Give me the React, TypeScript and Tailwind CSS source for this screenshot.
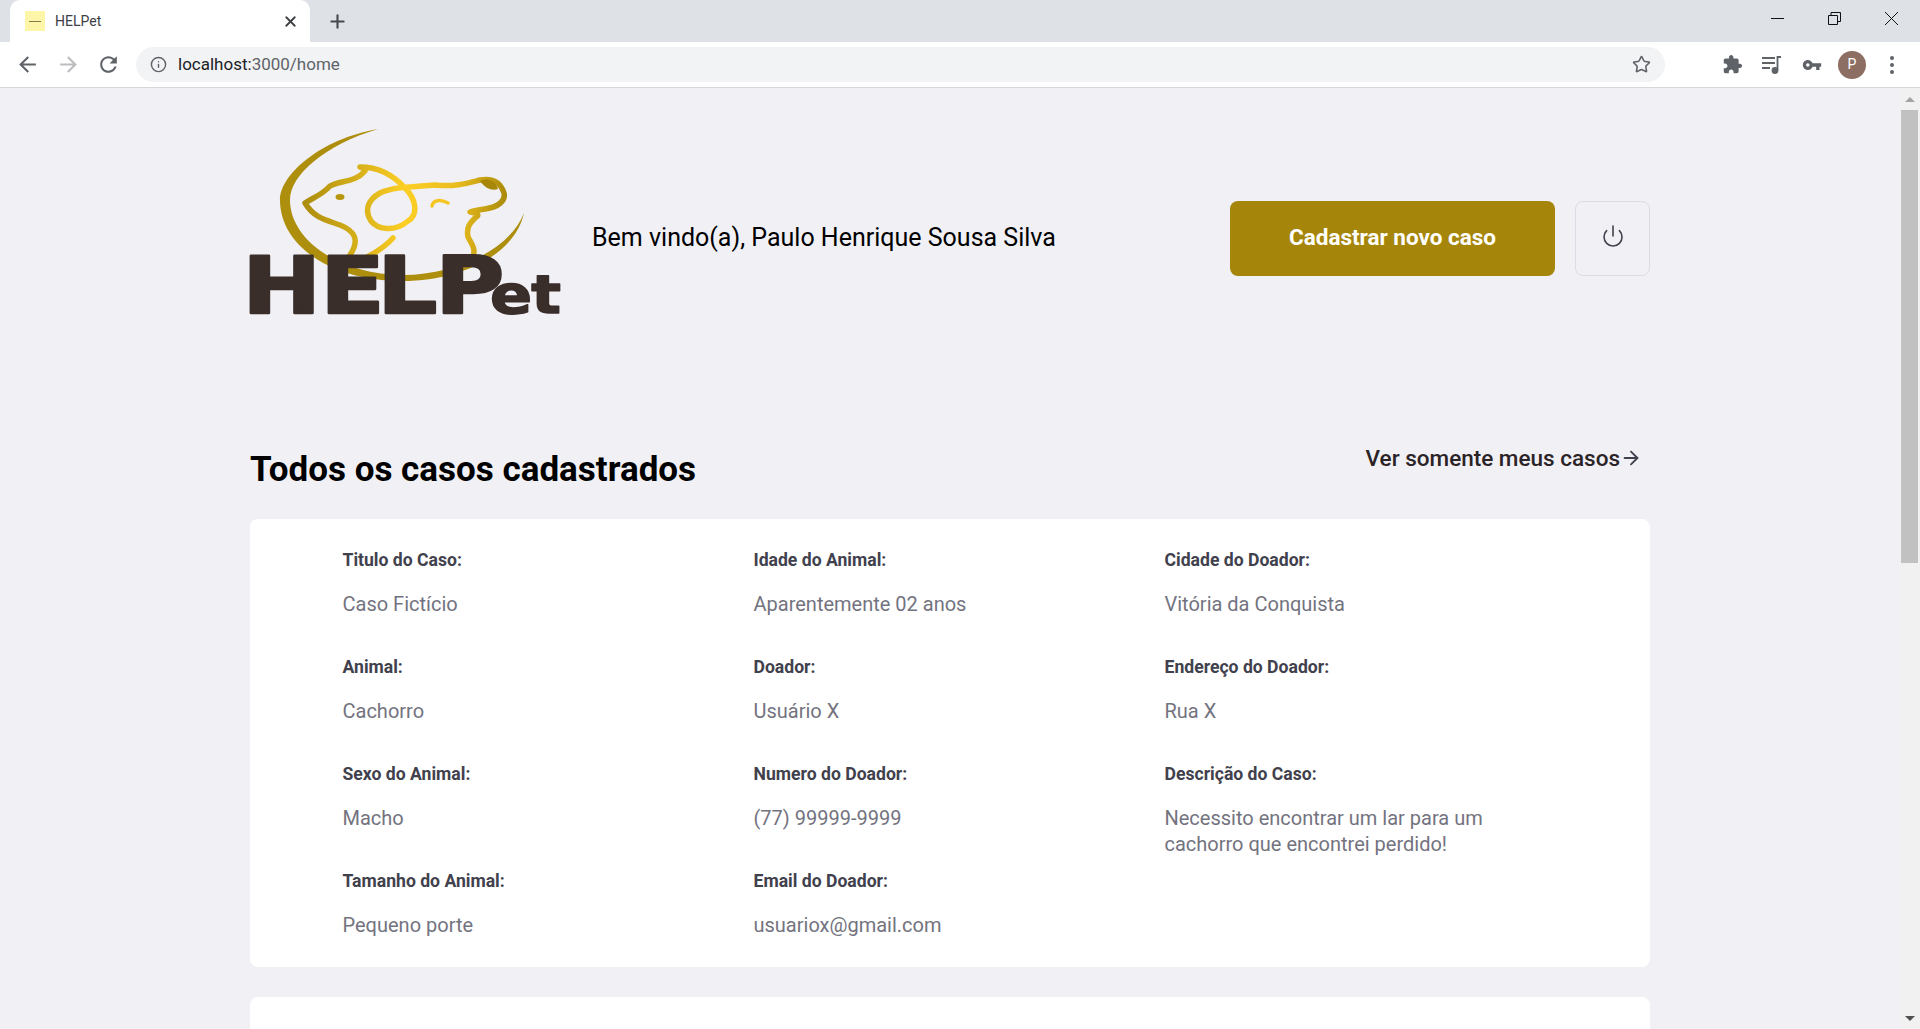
import { ArrowRight, Info, Star, Plus, X, Power } from "lucide-react";

interface Field {
  label: string;
  value: string;
}

const columns: Field[][] = [
  [
    { label: "Titulo do Caso:", value: "Caso Fictício" },
    { label: "Animal:", value: "Cachorro" },
    { label: "Sexo do Animal:", value: "Macho" },
    { label: "Tamanho do Animal:", value: "Pequeno porte" },
  ],
  [
    { label: "Idade do Animal:", value: "Aparentemente 02 anos" },
    { label: "Doador:", value: "Usuário X" },
    { label: "Numero do Doador:", value: "(77) 99999-9999" },
    { label: "Email do Doador:", value: "usuariox@gmail.com" },
  ],
  [
    { label: "Cidade do Doador:", value: "Vitória da Conquista" },
    { label: "Endereço do Doador:", value: "Rua X" },
    { label: "Descrição do Caso:", value: "Necessito encontrar um lar para um cachorro que encontrei perdido!" },
  ],
];

const Logo = () => (
  <svg viewBox="0 0 350 215" className="w-[350px] h-[215px] -ml-[20px] -my-[13px] shrink-0">
    <defs>
      <linearGradient id="gold" gradientUnits="userSpaceOnUse" x1="70" y1="0" x2="280" y2="0">
        <stop offset="0" stopColor="#a88a0c" />
        <stop offset="0.5" stopColor="#fdcf25" />
        <stop offset="0.75" stopColor="#e8bc1e" />
        <stop offset="1" stopColor="#a68708" />
      </linearGradient>
    </defs>
    {/* ring */}
    <path
      d="M148 14C90 24 50 60 50 85C50 130 100 166 173 166C230 166 285 140 294 98C280 135 225 160 173 160C110 160 60 125 60 85C60 60 95 30 148 14Z"
      fill="#ad8e0d"
    />
    {/* dog */}
    <path
      d="M120 140C130 125 125 116 110 110C96 105 84 103 75 88C84 82 92 80 100 71C110 65 125 68 135 56C133 53 131 52 130 52C150 52 165 62 175 73C187 85 188 100 178 106C165 117 148 115 141 106C134 95 138 85 150 78C165 71 185 72 205 70C225 72 238 68 250 65C262 63 270 66 274 78C276 86 268 92 255 94C248 95 243 96 240 97C247 98 250 100 246 102C240 108 236 112 238 122C242 130 248 135 240 147M163 123C155 132 145 138 135 143"
      fill="none"
      stroke="url(#gold)"
      strokeWidth="5.5"
      strokeLinecap="round"
      strokeLinejoin="round"
    />
    <path d="M250 66C258 62 266 66 268 74C262 76 256 74 250 66Z" fill="#a68708" />
    <ellipse cx="110" cy="82" rx="4.5" ry="3" fill="#b8960f" />
    <path d="M202 91C203 85 210 84 218 88" fill="none" stroke="#f5c623" strokeWidth="3.5" strokeLinecap="round" />
    {/* wordmark */}
    <g transform="scale(1.2 1)">
      <text
        x="10.5 75.5 123 171.3"
        y="198"
        fontFamily="'DejaVu Sans', sans-serif"
        fontWeight="700"
        fontSize="78"
        fill="#3a2e2b"
        stroke="#3a2e2b"
        strokeWidth="2.5"
        strokeLinejoin="round"
      >
        HELP
      </text>
    </g>
    <g transform="scale(1.15 1)">
      <text
        x="226 262"
        y="198"
        fontFamily="'DejaVu Sans', sans-serif"
        fontWeight="700"
        fontSize="54"
        fill="#3a2e2b"
        stroke="#3a2e2b"
        strokeWidth="1.5"
        strokeLinejoin="round"
      >
        et
      </text>
    </g>
  </svg>
);

const BrowserChrome = () => (
  <div className="h-[88px] shrink-0 flex flex-col font-['Roboto',sans-serif]">
    <div className="h-[42px] bg-[#dee1e6] flex items-end pl-[10px]">
      <div className="w-[300px] h-[42px] bg-white rounded-t-[10px] flex items-center pl-[15px] pr-[11px]">
        <div className="w-5 h-5 bg-[#fdf5a8] flex items-center justify-center">
          <div className="w-3 h-px bg-[#8a7a4a]" />
        </div>
        <span className="ml-[10px] text-[14px] text-[#3c4043] flex-1">HELPet</span>
        <X size={17} strokeWidth={2.5} className="text-[#3c4043]" />
      </div>
      <div className="h-[42px] flex items-center ml-[17px]">
        <Plus size={21} strokeWidth={2.4} className="text-[#45484d]" />
      </div>
      <div className="flex-1" />
      <div className="h-[42px] flex items-center pb-[5px] text-[#111]">
        <div className="w-[57px] flex justify-center">
          <svg width="13" height="13" viewBox="0 0 13 13" stroke="currentColor"><path d="M0 6.5h13" /></svg>
        </div>
        <div className="w-[57px] flex justify-center">
          <svg width="13" height="13" viewBox="0 0 13 13" fill="none" stroke="currentColor"><path d="M.5 3.5h9v9h-9zM3 3.5V.5h9.5v9H9.5" /></svg>
        </div>
        <div className="w-[57px] flex justify-center">
          <svg width="13" height="13" viewBox="0 0 13 13" stroke="currentColor"><path d="M0 0l13 13M13 0L0 13" /></svg>
        </div>
      </div>
    </div>
    <div className="h-[45px] bg-white flex items-center pl-[15px] pr-[8px] text-[#5f6368]">
      <svg width="25" height="25" viewBox="0 0 24 24" fill="currentColor"><path d="M20 11H7.83l5.59-5.59L12 4l-8 8 8 8 1.41-1.41L7.83 13H20v-2z" /></svg>
      <svg width="25" height="25" viewBox="0 0 24 24" fill="currentColor" className="ml-[16px] text-[#bbbdc0]"><path d="M12 4l-1.41 1.41L16.17 11H4v2h12.17l-5.58 5.59L12 20l8-8z" /></svg>
      <svg width="25" height="25" viewBox="0 0 24 24" fill="currentColor" className="ml-[15px]"><path d="M17.65 6.35C16.2 4.9 14.21 4 12 4c-4.42 0-7.99 3.58-7.99 8s3.57 8 7.99 8c3.73 0 6.84-2.55 7.73-6h-2.08c-.82 2.33-3.04 4-5.65 4-3.31 0-6-2.69-6-6s2.69-6 6-6c1.66 0 3.14.69 4.22 1.78L13 11h7V4l-2.35 2.35z" /></svg>
      <div className="ml-[15px] h-[35px] flex-1 rounded-full bg-[#f1f3f4] flex items-center pl-[14px] pr-[14px]">
        <Info size={17} strokeWidth={2} />
        <span className="ml-[11px] text-[17px] text-[#202124]">localhost:<span className="text-[#5f6368]">3000/home</span></span>
        <div className="flex-1" />
        <Star size={19} strokeWidth={2} />
      </div>
      <div className="ml-[47px] flex items-center">
        <div className="w-10 flex justify-center">
          <svg width="21" height="21" viewBox="0 0 24 24" fill="currentColor"><path d="M20.5 11H19V7c0-1.1-.9-2-2-2h-4V3.5C13 2.12 11.88 1 10.5 1S8 2.12 8 3.5V5H4c-1.1 0-1.99.9-1.99 2v3.8H3.5c1.49 0 2.7 1.21 2.7 2.7s-1.21 2.7-2.7 2.7H2V20c0 1.1.9 2 2 2h3.8v-1.5c0-1.49 1.21-2.7 2.7-2.7 1.49 0 2.7 1.21 2.7 2.7V22H17c1.1 0 2-.9 2-2v-4h1.5c1.38 0 2.5-1.12 2.5-2.5S21.88 11 20.5 11z" /></svg>
        </div>
        <div className="w-10 flex justify-center">
          <svg width="20" height="20" viewBox="0 0 20 20" fill="none" stroke="currentColor" strokeWidth="1.8">
            <path d="M0 3h13M0 8h13M0 13h8M15.5 15V2H19" />
            <circle cx="13" cy="15.5" r="2.5" fill="currentColor" />
          </svg>
        </div>
        <div className="w-10 flex justify-center">
          <svg width="20" height="20" viewBox="0 0 24 24" fill="currentColor"><path d="M12.65 10C11.83 7.67 9.61 6 7 6c-3.31 0-6 2.69-6 6s2.69 6 6 6c2.61 0 4.83-1.67 5.65-4H17v4h4v-4h2v-4H12.65zM7 14c-1.1 0-2-.9-2-2s.9-2 2-2 2 .9 2 2-.9 2-2 2z" /></svg>
        </div>
        <div className="w-10 flex justify-center">
          <div className="w-[28px] h-[28px] rounded-full bg-[#8d6e63] text-white text-[14px] flex items-center justify-center">P</div>
        </div>
        <div className="w-10 flex justify-center">
          <svg width="6" height="20" viewBox="0 0 6 20" fill="currentColor">
            <circle cx="3" cy="3" r="2" />
            <circle cx="3" cy="10" r="2" />
            <circle cx="3" cy="17" r="2" />
          </svg>
        </div>
      </div>
    </div>
    <div className="h-px bg-[#d6d7da]" />
  </div>
);

const Scrollbar = () => (
  <div className="w-[19px] shrink-0 bg-[#f1f1f1] flex flex-col">
    <div className="w-[17px] h-[22px] flex items-center justify-center">
      <div className="w-0 h-0 border-l-[5px] border-r-[5px] border-b-[5px] border-l-transparent border-r-transparent border-b-[#a3a3a3]" />
    </div>
    <div className="w-[17px] h-[453px] bg-[#c1c1c1]" />
    <div className="flex-1" />
    <div className="w-[17px] h-[21px] flex items-center justify-center">
      <div className="w-0 h-0 border-l-[5px] border-r-[5px] border-t-[5px] border-l-transparent border-r-transparent border-t-[#505050]" />
    </div>
  </div>
);

export default function App() {
  return (
    <div className="h-[1029px] flex flex-col overflow-hidden bg-[#f0f0f5] font-['Roboto',sans-serif]">
      <BrowserChrome />
      <div className="flex flex-1 min-h-0">
        <main className="flex-1 min-w-0 overflow-hidden pr-[1px]">
          <div className="w-[1400px] mx-auto">
            <header className="flex items-center pt-[40px]">
              <Logo />
              <div className="flex-1 flex items-center mt-[31px]">
                <span className="ml-[12px] text-[25px] text-black">Bem vindo(a), Paulo Henrique Sousa Silva</span>
                <div className="flex-1" />
                <button className="w-[325px] h-[75px] rounded-lg bg-[#a6860a] text-white text-[22.5px] font-bold">Cadastrar novo caso</button>
                <button className="ml-[20px] w-[75px] h-[75px] rounded-lg border border-[#dcdce6] flex items-center justify-center text-[#41414d]">
                  <Power size={24} strokeWidth={1.6} className="-mt-[5px]" />
                </button>
              </div>
            </header>

            <div className="flex justify-between mt-[132px]">
              <h1 className="text-[35px] leading-[42px] font-bold text-black">Todos os casos cadastrados</h1>
              <a className="flex items-center -mt-[4px] text-[22.5px] leading-[26px] font-medium text-[#2b2326] h-[26px] pr-[8px]">
                Ver somente meus casos
                <ArrowRight size={22} strokeWidth={2} className="text-[#41414d]" />
              </a>
            </div>

            <section className="mt-[28px] bg-white rounded-lg h-[448px] pl-[92.5px] pt-[31px] grid grid-cols-[411px_411px_1fr]">
              {columns.map((col, i) => (
                <div key={i} className="flex flex-col">
                  {col.map((f) => (
                    <div key={f.label} className="h-[107px]">
                      <p className="text-[17.6px] leading-[21px] font-bold text-[#41414d]">{f.label}</p>
                      <p className="mt-[20px] text-[20px] leading-[26px] text-[#737380] w-[340px]">{f.value}</p>
                    </div>
                  ))}
                </div>
              ))}
            </section>

            <section className="mt-[30px] bg-white rounded-lg h-[448px]" />
          </div>
        </main>
        <Scrollbar />
      </div>
    </div>
  );
}
